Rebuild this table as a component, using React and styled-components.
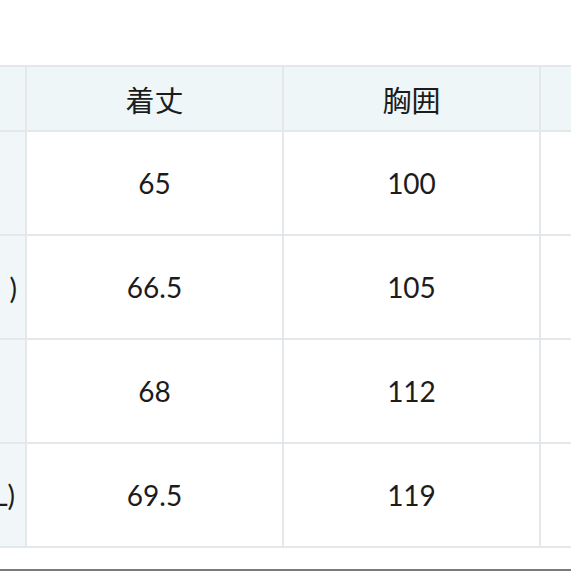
import styled, { createGlobalStyle } from 'styled-components';

const GlobalStyle = createGlobalStyle`
  html, body {
    margin: 0;
    padding: 0;
    background: #ffffff;
  }
  body {
    font-family: Lato, "Noto Sans CJK JP", sans-serif;
    color: #1c1c1c;
  }
`;

const Page = styled.div`
  width: 571px;
  height: 571px;
  overflow: hidden;
  display: flex;
  flex-direction: column;
`;

const TableViewport = styled.div`
  padding-top: 65px;
  overflow: hidden;
`;

const SizeTable = styled.table`
  margin-left: -232px;
  border-collapse: collapse;
  table-layout: fixed;
  width: 1030px;
  font-family: Lato, "Noto Sans CJK JP", sans-serif;
  font-size: 28px;
  box-shadow: 0 2px 3px rgba(0, 0, 0, 0.04);
`;

const HeadCell = styled.th`
  width: 255px;
  height: 63px;
  padding: 0;
  border: 2px solid #e4e8ea;
  background: #eef6f8;
  font-family: "Noto Sans CJK JP", Lato, sans-serif;
  font-weight: 400;
  font-size: 29px;
  color: #1c1c1c;
  text-align: center;
  vertical-align: middle;
`;

const LabelCell = styled.td`
  height: 102px;
  padding: 0 ${(p) => p.$inset}px 0 0;
  border: 2px solid #e4e8ea;
  background: #f1f7f8;
  text-align: right;
  vertical-align: middle;
  white-space: pre;
  color: #1c1c1c;
`;

const ValueCell = styled.td`
  height: 102px;
  padding: 0;
  border: 2px solid #e4e8ea;
  background: #ffffff;
  text-align: center;
  vertical-align: middle;
  color: #1c1c1c;
`;

const Divider = styled.div`
  margin-top: 21px;
  border-top: 2px solid #7a7a7a;
`;

const columns = ['サイズ', '着丈', '胸囲', '肩幅'];

const rows = [
  { size: 'S', inset: 25, length: '65', chest: '100', shoulder: '44' },
  { size: 'M(9号  )', inset: 8, length: '66.5', chest: '105', shoulder: '46' },
  { size: 'L', inset: 25, length: '68', chest: '112', shoulder: '48' },
  { size: 'XL(LL)', inset: 10, length: '69.5', chest: '119', shoulder: '50' },
];

const App = () => {
  return (
    <>
      <GlobalStyle />
      <Page>
        <TableViewport>
          <SizeTable>
            <thead>
              <tr>
                {columns.map((c) => (
                  <HeadCell key={c}>{c}</HeadCell>
                ))}
              </tr>
            </thead>
            <tbody>
              {rows.map((r) => (
                <tr key={r.size}>
                  <LabelCell $inset={r.inset}>{r.size}</LabelCell>
                  <ValueCell>{r.length}</ValueCell>
                  <ValueCell>{r.chest}</ValueCell>
                  <ValueCell>{r.shoulder}</ValueCell>
                </tr>
              ))}
            </tbody>
          </SizeTable>
        </TableViewport>
        <Divider />
      </Page>
    </>
  );
};

export default App;
